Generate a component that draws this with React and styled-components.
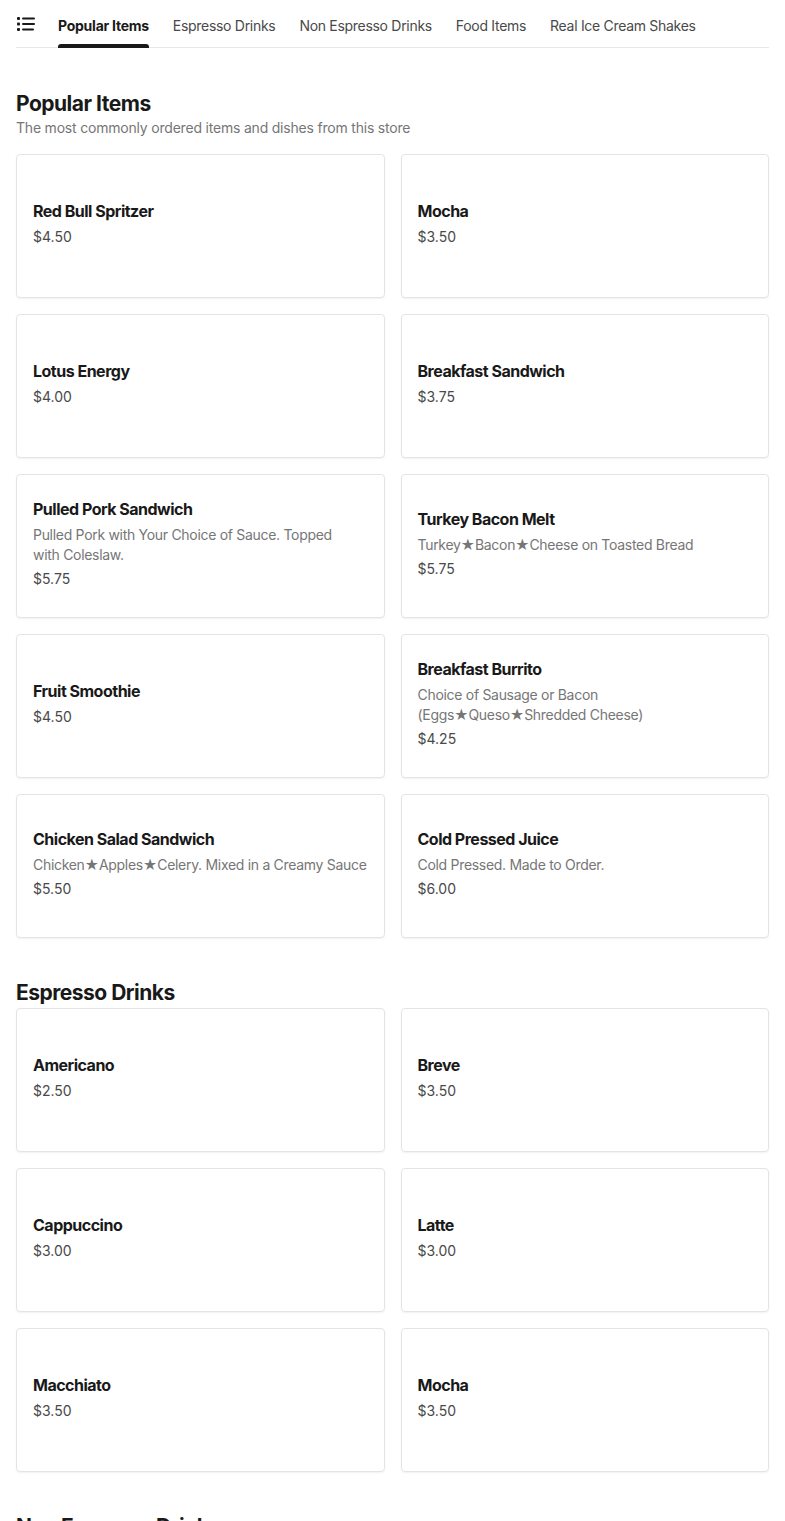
import React from 'react';
import styled, { createGlobalStyle } from 'styled-components';

const GlobalStyle = createGlobalStyle`
  body {
    margin: 0;
    background: #ffffff;
    font-family: 'Inter', 'Liberation Sans', sans-serif;
    color: #191919;
  }
`;

const Page = styled.div`
  padding: 0 16px;
`;

const Nav = styled.nav`
  display: flex;
  align-items: stretch;
  height: 47px;
  border-bottom: 1px solid #e7e7e7;
`;

const MenuButton = styled.div`
  display: flex;
  align-items: center;
  width: 42px;
  flex-shrink: 0;
`;

const Tabs = styled.div`
  display: flex;
  gap: 24px;
`;

const Tab = styled.div`
  position: relative;
  display: flex;
  align-items: center;
  font-size: 14px;
  letter-spacing: ${(p) => (p.active ? '-0.25px' : '-0.3px')};
  font-weight: ${(p) => (p.active ? 700 : 400)};
  color: ${(p) => (p.active ? '#191919' : '#494949')};
  white-space: nowrap;
  padding-top: 3px;

  &::after {
    content: '';
    display: ${(p) => (p.active ? 'block' : 'none')};
    position: absolute;
    left: 0;
    right: 0;
    bottom: -1px;
    height: 4px;
    background: #191919;
    border-radius: 3px 3px 0 0;
  }
`;

const Section = styled.section`
  padding-top: ${(p) => (p.first ? '42px' : '41px')};
`;

const Heading = styled.h2`
  margin: 0;
  font-size: 21px;
  line-height: 28px;
  font-weight: 700;
  letter-spacing: -0.5px;
`;

const Subtitle = styled.p`
  margin: 0;
  font-size: 14px;
  line-height: 20px;
  letter-spacing: -0.2px;
  color: #767676;
`;

const Grid = styled.div`
  display: grid;
  grid-template-columns: 1fr 1fr;
  gap: 16px;
  margin-top: ${(p) => (p.spaced ? '16px' : '1px')};
`;

const Card = styled.div`
  box-sizing: border-box;
  height: 144px;
  border: 1px solid #e4e4e4;
  border-radius: 4px;
  box-shadow: 0 1px 2px rgba(0, 0, 0, 0.06);
  padding: 0 16px 6px;
  display: flex;
  flex-direction: column;
  justify-content: center;
  gap: 4px;
`;

const ItemName = styled.div`
  font-size: 16px;
  line-height: 24px;
  font-weight: 700;
  letter-spacing: -0.5px;
`;

const ItemDesc = styled.div`
  font-size: 14px;
  line-height: 20px;
  letter-spacing: -0.3px;
  color: #767676;
`;

const DescLine = styled.span`
  display: block;
  white-space: nowrap;
`;

const Price = styled.div`
  font-size: 14px;
  line-height: 20px;
  color: #494949;
`;

const ListIcon = () => (
  <svg width="20" height="16" viewBox="0 0 20 16" fill="#191919">
    <rect x="1" y="1" width="3" height="3" rx="1" />
    <rect x="6" y="1.5" width="13" height="2" rx="1" />
    <rect x="1" y="6.5" width="3" height="3" rx="1" />
    <rect x="6" y="7" width="13" height="2" rx="1" />
    <rect x="1" y="12" width="3" height="3" rx="1" />
    <rect x="6" y="12.5" width="12" height="2" rx="1" />
  </svg>
);

const tabs = [
  'Popular Items',
  'Espresso Drinks',
  'Non Espresso Drinks',
  'Food Items',
  'Real Ice Cream Shakes',
];

// desc is split the way the store page wraps it
const popular = [
  { name: 'Red Bull Spritzer', price: '$4.50' },
  { name: 'Mocha', price: '$3.50' },
  { name: 'Lotus Energy', price: '$4.00' },
  { name: 'Breakfast Sandwich', price: '$3.75' },
  {
    name: 'Pulled Pork Sandwich',
    desc: ['Pulled Pork with Your Choice of Sauce. Topped', 'with Coleslaw.'],
    price: '$5.75',
  },
  {
    name: 'Turkey Bacon Melt',
    desc: ['Turkey★Bacon★Cheese on Toasted Bread'],
    price: '$5.75',
  },
  { name: 'Fruit Smoothie', price: '$4.50' },
  {
    name: 'Breakfast Burrito',
    desc: ['Choice of Sausage or Bacon', '(Eggs★Queso★Shredded Cheese)'],
    price: '$4.25',
  },
  {
    name: 'Chicken Salad Sandwich',
    desc: ['Chicken★Apples★Celery. Mixed in a Creamy Sauce'],
    price: '$5.50',
  },
  {
    name: 'Cold Pressed Juice',
    desc: ['Cold Pressed. Made to Order.'],
    price: '$6.00',
  },
];

const espresso = [
  { name: 'Americano', price: '$2.50' },
  { name: 'Breve', price: '$3.50' },
  { name: 'Cappuccino', price: '$3.00' },
  { name: 'Latte', price: '$3.00' },
  { name: 'Macchiato', price: '$3.50' },
  { name: 'Mocha', price: '$3.50' },
];

const nonEspresso = [
  { name: 'Chai Latte', price: '$3.50' },
  { name: 'Hot Chocolate', price: '$3.00' },
];

function ItemCard({ item }) {
  return (
    <Card>
      <ItemName>{item.name}</ItemName>
      {item.desc && (
        <ItemDesc>
          {item.desc.map((line, i) => (
            <DescLine key={i}>{line}</DescLine>
          ))}
        </ItemDesc>
      )}
      <Price>{item.price}</Price>
    </Card>
  );
}

export default function App() {
  return (
    <Page>
      <GlobalStyle />
      <Nav>
        <MenuButton>
          <ListIcon />
        </MenuButton>
        <Tabs>
          {tabs.map((t, i) => (
            <Tab key={t} active={i === 0}>
              {t}
            </Tab>
          ))}
        </Tabs>
      </Nav>

      <Section first>
        <Heading>Popular Items</Heading>
        <Subtitle>The most commonly ordered items and dishes from this store</Subtitle>
        <Grid spaced>
          {popular.map((item, i) => (
            <ItemCard key={i} item={item} />
          ))}
        </Grid>
      </Section>

      <Section>
        <Heading>Espresso Drinks</Heading>
        <Grid>
          {espresso.map((item, i) => (
            <ItemCard key={i} item={item} />
          ))}
        </Grid>
      </Section>

      <Section>
        <Heading>Non Espresso Drinks</Heading>
        <Grid>
          {nonEspresso.map((item, i) => (
            <ItemCard key={i} item={item} />
          ))}
        </Grid>
      </Section>
    </Page>
  );
}
